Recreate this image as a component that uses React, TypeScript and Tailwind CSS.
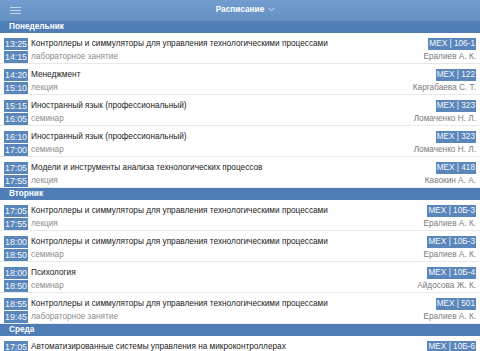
import React from 'react';

interface Lesson {
  start: string;
  end: string;
  title: string;
  kind: string;
  room: string;
  teacher: string;
}

interface Day {
  name: string;
  lessons: Lesson[];
}

const CTRL = 'Контроллеры и симмуляторы для управления технологическими процессами';

const days: Day[] = [
  {
    name: 'Понедельник',
    lessons: [
      { start: '13:25', end: '14:15', title: CTRL, kind: 'лабораторное занятие', room: 'МЕХ | 106-1', teacher: 'Ералиев А. К.' },
      { start: '14:20', end: '15:10', title: 'Менеджмент', kind: 'лекция', room: 'МЕХ | 122', teacher: 'Каргабаева С. Т.' },
      { start: '15:15', end: '16:05', title: 'Иностранный язык (профессиональный)', kind: 'семинар', room: 'МЕХ | 323', teacher: 'Ломаченко Н. Л.' },
      { start: '16:10', end: '17:00', title: 'Иностранный язык (профессиональный)', kind: 'семинар', room: 'МЕХ | 323', teacher: 'Ломаченко Н. Л.' },
      { start: '17:05', end: '17:55', title: 'Модели и инструменты анализа технологических процессов', kind: 'лекция', room: 'МЕХ | 418', teacher: 'Кавокин А. А.' },
    ],
  },
  {
    name: 'Вторник',
    lessons: [
      { start: '17:05', end: '17:55', title: CTRL, kind: 'лекция', room: 'МЕХ | 10Б-3', teacher: 'Ералиев А. К.' },
      { start: '18:00', end: '18:50', title: CTRL, kind: 'семинар', room: 'МЕХ | 10Б-3', teacher: 'Ералиев А. К.' },
      { start: '18:00', end: '18:50', title: 'Психология', kind: 'семинар', room: 'МЕХ | 10Б-4', teacher: 'Айдосова Ж. К.' },
      { start: '18:55', end: '19:45', title: CTRL, kind: 'лабораторное занятие', room: 'МЕХ | 501', teacher: 'Ералиев А. К.' },
    ],
  },
  {
    name: 'Среда',
    lessons: [
      { start: '17:05', end: '17:55', title: 'Автоматизированные системы управления на микроконтроллерах', kind: 'лекция', room: 'МЕХ | 10Б-6', teacher: 'Ералиев А. К.' },
    ],
  },
];

const Badge: React.FC<{ children: React.ReactNode; time?: boolean }> = ({ children, time }) => (
  <span className={`bg-[#5a86bb] text-[#f4f8fc] px-[1px] leading-[12px] h-[12px] inline-block ${time ? 'text-[8.8px]' : ''}`}>
    {children}
  </span>
);

const Row: React.FC<{ lesson: Lesson }> = ({ lesson }) => (
  <div className="h-[31px] border-b border-[#e8e8e8] px-[4px] pt-[5px] grid grid-cols-[auto_1fr_auto] gap-y-[1px] text-[8.25px]">
    <div className="flex"><Badge time>{lesson.start}</Badge></div>
    <div className="pl-[3px] leading-[12px] text-[#222] whitespace-nowrap overflow-hidden">{lesson.title}</div>
    <div className="flex justify-end"><Badge>{lesson.room}</Badge></div>
    <div className="flex"><Badge time>{lesson.end}</Badge></div>
    <div className="pl-[3px] leading-[12px] text-[#8c8c8c]">{lesson.kind}</div>
    <div className="leading-[12px] text-[#7a7a7a] text-right">{lesson.teacher}</div>
  </div>
);

export default function App() {
  return (
    <div className="w-[480px] h-[351px] overflow-hidden bg-white" style={{ fontFamily: '"Liberation Sans", Arial, sans-serif' }}>
      {/* Top bar */}
      <div className="h-[21px] bg-gradient-to-b from-[#729dcf] to-[#6590c3] relative flex items-center justify-center">
        <div className="absolute left-[10px] top-[7px] flex flex-col gap-[2px]">
          <span className="block w-[11px] h-[1px] bg-[#c3d5ea]" />
          <span className="block w-[11px] h-[1px] bg-[#c3d5ea]" />
          <span className="block w-[11px] h-[1px] bg-[#c3d5ea]" />
        </div>
        <div className="relative text-white text-[8.25px] font-bold">
          Расписание
          <svg className="absolute left-full top-[3px] ml-[4px]" width="7" height="5" viewBox="0 0 7 5" fill="none">
            <path d="M0.5 0.8 L3.5 3.8 L6.5 0.8" stroke="#dbe6f3" strokeWidth="1" />
          </svg>
        </div>
      </div>

      {days.map((day) => (
        <div key={day.name}>
          <div className="h-[12px] bg-[#4f7eb6] text-white text-[8.25px] font-bold leading-[12px] pl-[9px]">{day.name}</div>
          {day.lessons.map((l, i) => (
            <Row key={i} lesson={l} />
          ))}
        </div>
      ))}
    </div>
  );
}
